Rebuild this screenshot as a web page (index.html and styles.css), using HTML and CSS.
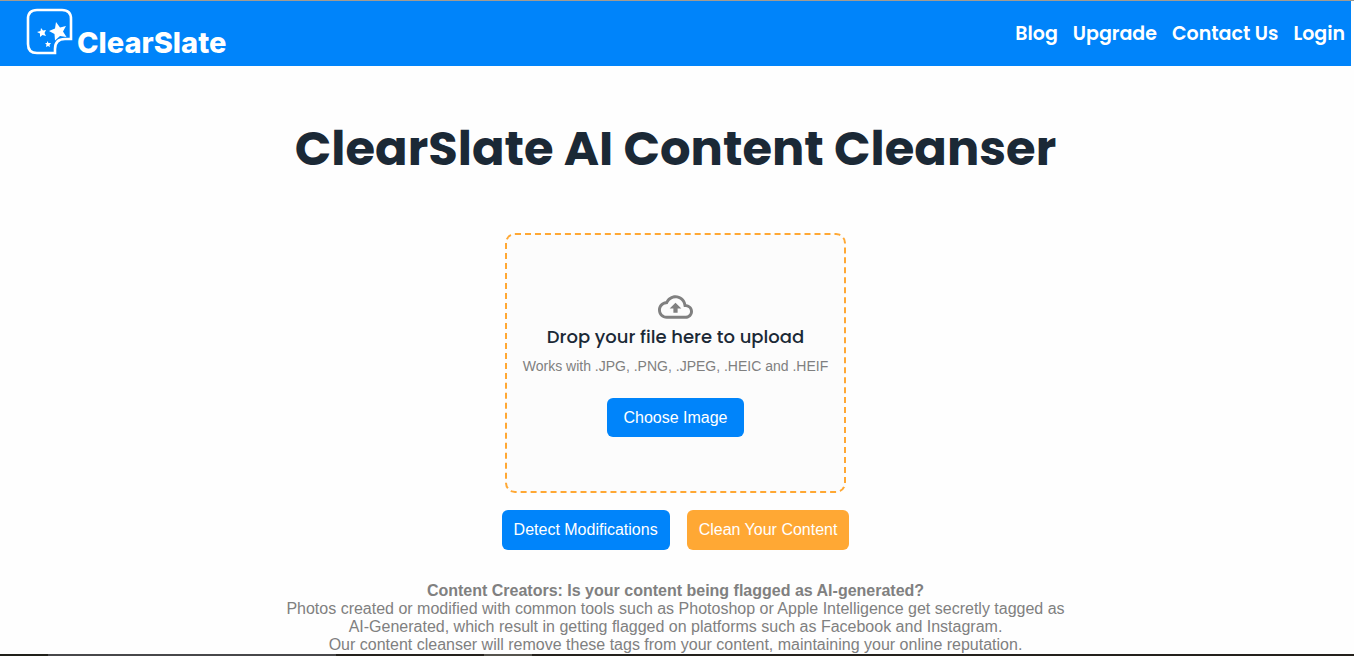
FILE: index.html
```html
<!DOCTYPE html>
<html lang="en">
<head>
<meta charset="utf-8">
<meta name="viewport" content="width=device-width, initial-scale=1">
<title>ClearSlate AI Content Cleanser</title>
<link rel="stylesheet" href="styles.css">
</head>
<body>
<header class="navbar">
  <a class="brand" href="#">
    <svg class="brand-icon" viewBox="0 0 46 46" aria-hidden="true">
      <path d="M44 30V10Q44 1 35 1H10Q1 1 1 10V35Q1 44 10 44H28V40Q28 30 38 30Z" fill="none" stroke="#fff" stroke-width="2.600"/>
      <path d="M29 13L33 18.500L39 17L36 22.500L39.500 28L33 27L28 31.500L27.500 25L22 22L28 19.500Z" fill="#fff"/>
      <path d="M14 19L16 21.500L19 21L17.500 24L19 27L15.500 26L13 28V24.500L10 23L13.500 22Z" fill="#fff"/>
      <path d="M20 32L21.500 34L24 34L22.500 36L23 38L21 37L19 38L19.500 35.500L18 34L20 34Z" fill="#fff"/>
    </svg>
    <span class="brand-name">ClearSlate</span>
  </a>
  <nav class="nav-links">
    <a href="#">Blog</a>
    <a href="#">Upgrade</a>
    <a href="#">Contact Us</a>
    <a href="#">Login</a>
  </nav>
</header>
<main class="content">
  <h1 class="title">ClearSlate AI Content Cleanser</h1>
  <section class="dropzone">
    <svg class="upload-icon" viewBox="0 4 24 16" aria-hidden="true">
      <path fill="#808080" d="M19.35 10.04C18.67 6.59 15.64 4 12 4 9.110 4 6.600 5.640 5.350 8.040 2.340 8.360 0 10.910 0 14c0 3.310 2.690 6 6 6h13c2.760 0 5-2.240 5-5 0-2.640-2.050-4.780-4.650-4.960zM19 18H6c-2.210 0-4-1.790-4-4 0-2.050 1.530-3.760 3.560-3.970l1.070-.11.5-.95C8.080 7.140 9.940 6 12 6c2.620 0 4.880 1.860 5.390 4.430l.3 1.500 1.530.11c1.560.1 2.780 1.410 2.780 2.960 0 1.650-1.350 3-3 3zM8 13h2.550v3h2.900v-3H16l-4-4z"/>
    </svg>
    <h2 class="drop-title">Drop your file here to upload</h2>
    <p class="drop-hint">Works with .JPG, .PNG, .JPEG, .HEIC and .HEIF</p>
    <button class="button choose" type="button">Choose Image</button>
  </section>
  <div class="actions">
    <button class="button" type="button">Detect Modifications</button>
    <button class="button clean" type="button">Clean Your Content</button>
  </div>
  <p class="about"><strong>Content Creators: Is your content being flagged as AI-generated?</strong><br>
    Photos created or modified with common tools such as Photoshop or Apple Intelligence get secretly tagged as AI-Generated, which result in getting flagged on platforms such as Facebook and Instagram.<br>
    Our content cleanser will remove these tags from your content, maintaining your online reputation.</p>
</main>
<div class="bottom-edge"></div>
</body>
</html>
```
FILE: styles.css
```css
* {
  box-sizing: border-box;
}

body {
  display: flex;
  flex-direction: column;
  min-height: 100vh;
  margin: 0;
  border-top: 1px solid #a39b90;
  background: #fefefe;
  font-family: "Liberation Sans", Arial, sans-serif;
  font-size: 16px;
  line-height: 18px;
  color: #808080;
}

.navbar {
  display: flex;
  justify-content: space-between;
  align-items: center;
  height: 65px;
  margin-right: 3px;
  padding: 0 6px 0 27px;
  background: #0084fa;
}

.brand {
  display: flex;
  align-items: flex-end;
  gap: 4px;
  padding-bottom: 4px;
  color: #fff;
  text-decoration: none;
}

.brand-icon {
  width: 46px;
  height: 46px;
  overflow: visible;
}

.brand-name {
  font-family: Inter, sans-serif;
  font-size: 29px;
  font-weight: 800;
  line-height: 24px;
}

.nav-links {
  display: flex;
  gap: 15px;
}

.nav-links a {
  color: #fff;
  font-family: Poppins, Inter, sans-serif;
  font-size: 19px;
  font-weight: 600;
  line-height: 28px;
  text-decoration: none;
}

.content {
  display: flex;
  flex: 1;
  flex-direction: column;
  align-items: center;
  margin-right: 3px;
}

.title {
  margin: 47px 0 48px;
  color: #1b2936;
  font-family: Poppins, Inter, sans-serif;
  font-size: 48px;
  font-weight: 700;
  line-height: 72px;
  text-align: center;
}

.dropzone {
  display: flex;
  flex-direction: column;
  align-items: center;
  padding: 60px 16px 54px;
  border: 2px dashed #ffa834;
  border-radius: 10px;
  background: #fcfcfc;
}

.upload-icon {
  width: 35px;
  height: 24px;
}

.drop-title {
  margin: 4px 0 6px;
  color: #1b2936;
  font-family: Poppins, Inter, sans-serif;
  font-size: 18px;
  font-weight: 500;
  line-height: 28px;
}

.drop-hint {
  margin: 0 0 23px;
  font-size: 14px;
  line-height: 18px;
}

.button {
  height: 40px;
  padding: 0 12px;
  border: 0;
  border-radius: 6px;
  background: #0084fa;
  color: #fff;
  font-family: inherit;
  font-size: 16px;
}

.choose {
  height: 39px;
  padding: 0 16px;
}

.clean {
  background: #ffa834;
}

.actions {
  display: flex;
  gap: 17px;
  margin-top: 17px;
}

.about {
  max-width: 800px;
  margin: 32px 0 0;
  text-align: center;
}

.bottom-edge {
  height: 2px;
  background: linear-gradient(to right, #20201a 48px, #48484a 48px, #48484a 336px, #24211c 336px, #24211c 484px, #55534d 484px, #55534d 532px, #24211c 532px);
}
```
